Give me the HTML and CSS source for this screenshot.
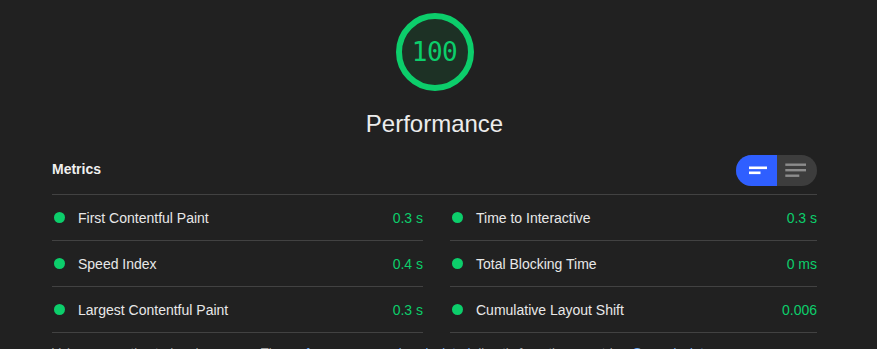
FILE: index.html
```html
<!DOCTYPE html>
<html lang="en">
<head>
<meta charset="utf-8">
<title>Performance</title>
<link rel="stylesheet" href="styles.css">
</head>
<body>
<div class="report">
  <div class="category-header">
    <div class="gauge">
      <svg class="gauge-svg" width="78" height="78" viewBox="0 0 78 78">
        <circle cx="39" cy="39" r="36" class="gauge-ring"/>
      </svg>
      <span class="gauge-value">100</span>
    </div>
    <div class="category-title">Performance</div>
  </div>

  <div class="metrics">
    <div class="metrics-header">
      <span class="metrics-title">Metrics</span>
      <div class="toggle">
        <span class="toggle-btn toggle-btn--active">
          <svg width="41" height="31" viewBox="0 0 41 31">
            <rect x="13" y="11.5" width="18" height="2.6" fill="#fff"/>
            <rect x="13" y="16.5" width="11.5" height="2.6" fill="#fff"/>
          </svg>
        </span>
        <span class="toggle-btn">
          <svg width="40" height="31" viewBox="0 0 40 31">
            <rect x="8.3" y="8.5" width="20.7" height="2.4" fill="#8c8c8c"/>
            <rect x="8.3" y="14" width="20.7" height="2.4" fill="#8c8c8c"/>
            <rect x="8.3" y="19.5" width="14" height="2.4" fill="#8c8c8c"/>
          </svg>
        </span>
      </div>
    </div>
    <div class="metric-grid">
      <div class="metric"><span class="dot"></span><span class="metric-name">First Contentful Paint</span><span class="metric-value">0.3&nbsp;s</span></div>
      <div class="metric"><span class="dot"></span><span class="metric-name">Time to Interactive</span><span class="metric-value">0.3&nbsp;s</span></div>
      <div class="metric"><span class="dot"></span><span class="metric-name">Speed Index</span><span class="metric-value">0.4&nbsp;s</span></div>
      <div class="metric"><span class="dot"></span><span class="metric-name">Total Blocking Time</span><span class="metric-value">0&nbsp;ms</span></div>
      <div class="metric"><span class="dot"></span><span class="metric-name">Largest Contentful Paint</span><span class="metric-value">0.3&nbsp;s</span></div>
      <div class="metric"><span class="dot"></span><span class="metric-name">Cumulative Layout Shift</span><span class="metric-value">0.006</span></div>
    </div>
    <p class="metrics-desc">Values are estimated and may vary. The <a href="#" class="link">performance score is calculated</a> directly from these metrics. <a href="#" class="link">See calculator.</a></p>
  </div>
</div>
</body>
</html>
```
FILE: styles.css
```css
html, body {
  margin: 0;
  padding: 0;
  background: #212121;
}
body {
  font-family: "Liberation Sans", Arial, Helvetica, sans-serif;
  color: #e6e6e6;
  overflow: hidden;
}
.report {
  width: 765px;
  margin-left: 52px;
}
.category-header {
  display: flex;
  flex-direction: column;
  align-items: center;
  padding-top: 13px;
}
.gauge {
  position: relative;
  width: 78px;
  height: 78px;
}
.gauge-svg {
  display: block;
}
.gauge-ring {
  fill: #1d3125;
  stroke: #0cce6b;
  stroke-width: 6;
}
.gauge-value {
  position: absolute;
  left: 0;
  top: 0;
  width: 78px;
  height: 78px;
  display: flex;
  align-items: center;
  justify-content: center;
  font-family: "DejaVu Sans Mono", "Liberation Mono", monospace;
  font-size: 26px;
  color: #0cce6b;
  letter-spacing: -0.5px;
}
.category-title {
  margin-top: 19px;
  font-size: 24px;
  line-height: 28px;
  color: #ececec;
}
.metrics {
  margin-top: 17px;
}
.metrics-header {
  display: flex;
  align-items: center;
  justify-content: space-between;
  padding-bottom: 8px;
  border-bottom: 1px solid #424242;
}
.metrics-title {
  font-weight: bold;
  font-size: 14px;
  color: #f0f0f0;
  margin-top: -3px;
}
.toggle {
  display: flex;
  width: 81px;
  height: 31px;
  border-radius: 16px;
  overflow: hidden;
  background: #3d3d3d;
}
.toggle-btn {
  display: block;
  width: 40px;
  height: 31px;
}
.toggle-btn svg {
  display: block;
}
.toggle-btn--active {
  width: 41px;
  background: #2f5fff;
}
.metric-grid {
  display: grid;
  grid-template-columns: 371px 367px;
  column-gap: 27px;
}
.metric {
  display: flex;
  align-items: center;
  height: 45px;
  border-bottom: 1px solid #424242;
  font-size: 14px;
}
.dot {
  width: 11px;
  height: 11px;
  border-radius: 50%;
  background: #0cce6b;
  margin-left: 2px;
  margin-right: 13px;
  flex: none;
}
.metric-name {
  flex: 1;
  color: #e8e8e8;
}
.metric-value {
  color: #0cce6b;
}
.metrics-desc {
  margin: 10px 0 0;
  font-size: 13px;
  line-height: 20px;
  color: #9e9e9e;
}
.link {
  color: #6da7ef;
  text-decoration: none;
}
```
